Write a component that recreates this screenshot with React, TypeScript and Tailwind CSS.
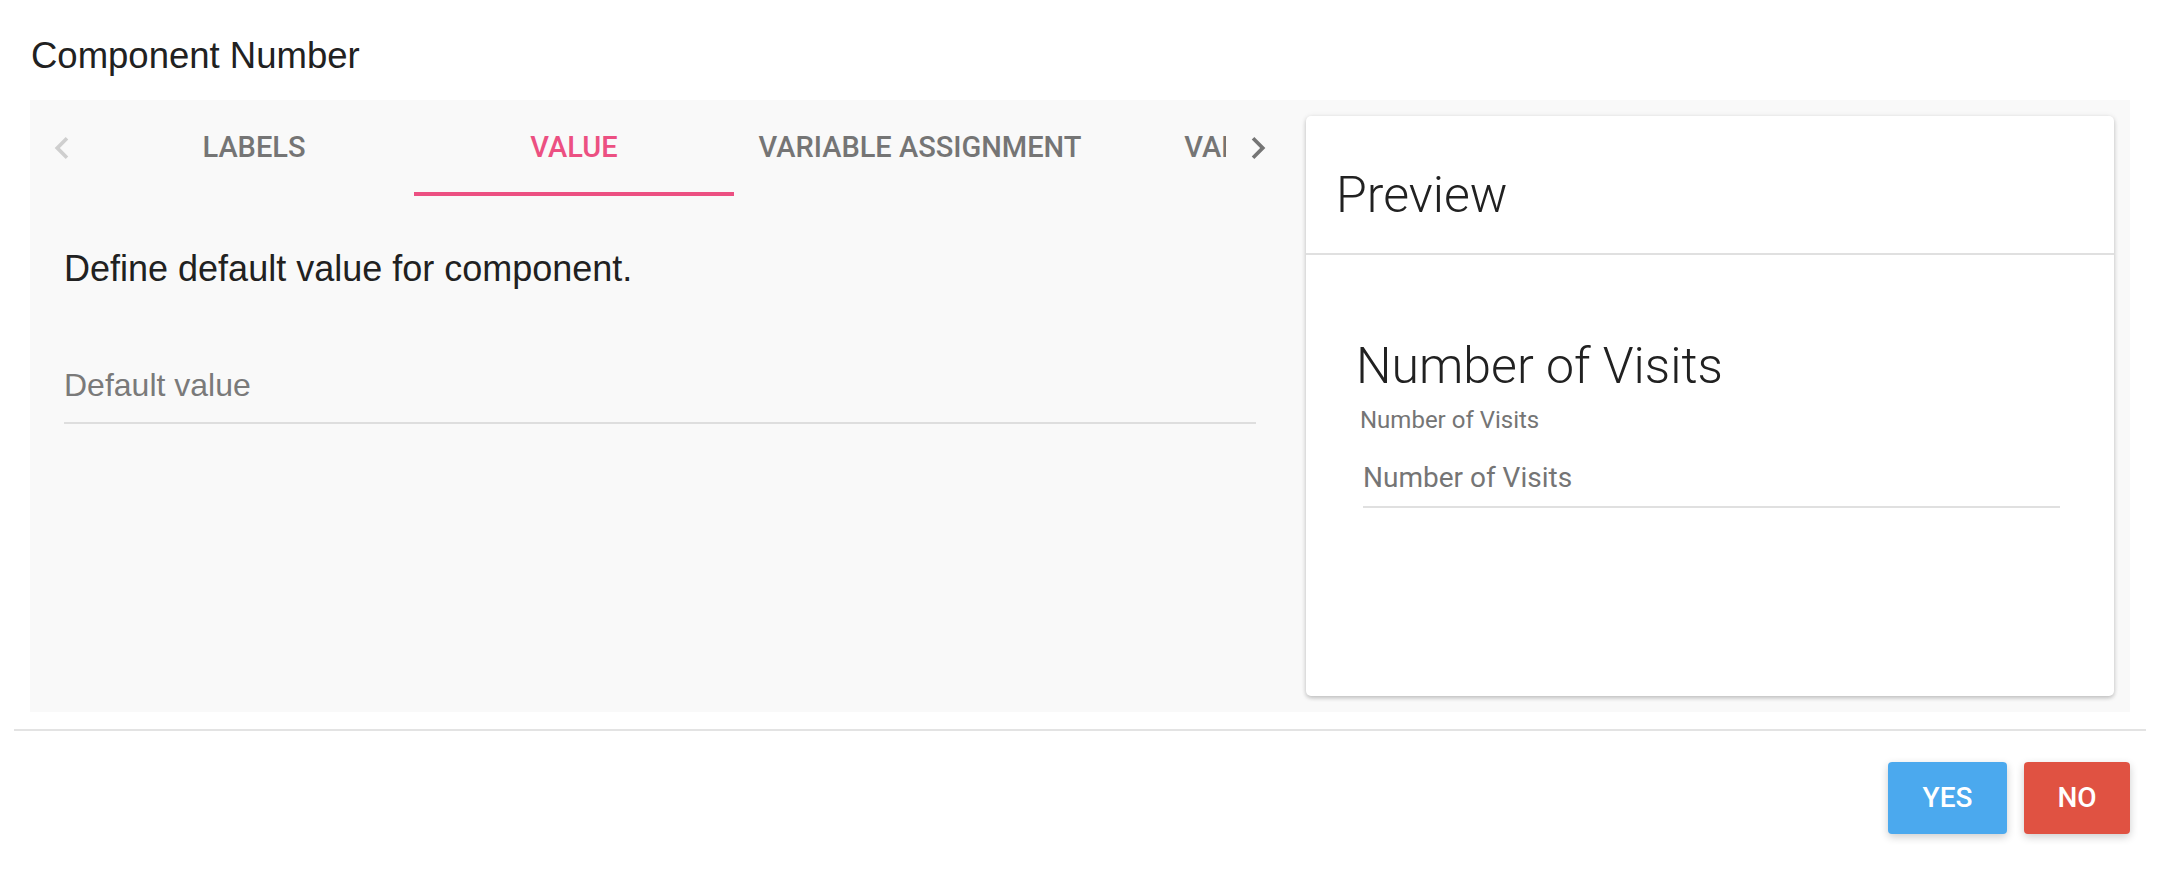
import React from "react";

const tabs = [
  { label: "LABELS", width: "w-[320px]" },
  { label: "VALUE", width: "w-[320px]", active: true },
  { label: "VARIABLE ASSIGNMENT", width: "w-[372px]" },
  { label: "VALIDATION", width: "w-[320px]" },
];

function ChevronLeft({ className }: { className?: string }) {
  return (
    <svg viewBox="0 0 24 24" className={className} fill="currentColor">
      <path d="M15.41 7.41L14 6l-6 6 6 6 1.41-1.41L10.83 12z" />
    </svg>
  );
}

function ChevronRight({ className }: { className?: string }) {
  return (
    <svg viewBox="0 0 24 24" className={className} fill="currentColor">
      <path d="M10 6L8.59 7.41 13.17 12l-4.58 4.59L10 18l6-6z" />
    </svg>
  );
}

export default function App() {
  return (
    <div className="min-h-screen bg-white font-['Liberation_Sans',Arial,sans-serif]">
      {/* Title */}
      <div className="px-[30px] pt-[34px]">
        <h1 className="text-[36.5px] leading-[44px] text-[#212121] pl-[1px]">
          Component Number
        </h1>
      </div>

      {/* Body panel */}
      <div className="mx-[30px] mt-[22px] flex h-[612px] bg-[#f9f9f9]">
        {/* Left: tabs + content */}
        <div className="flex min-w-0 flex-1 flex-col">
          <div className="flex h-[96px]">
            <button className="flex w-[64px] shrink-0 items-center justify-center text-[#cfcfcf]">
              <ChevronLeft className="h-[44px] w-[44px]" />
            </button>
            <div className="flex min-w-0 flex-1 overflow-hidden">
              {tabs.map((tab) => (
                <div
                  key={tab.label}
                  className={`relative flex shrink-0 items-center justify-center ${tab.width}`}
                >
                  <span
                    className={`whitespace-nowrap font-['Roboto',sans-serif] text-[29px] font-medium ${
                      tab.active ? "text-[#ec5082]" : "text-[#757575]"
                    }`}
                  >
                    {tab.label}
                  </span>
                  {tab.active && (
                    <div className="absolute bottom-0 left-0 right-0 h-[4px] bg-[#ec5082]" />
                  )}
                </div>
              ))}
            </div>
            <button className="flex w-[64px] shrink-0 items-center justify-center text-[#757575]">
              <ChevronRight className="h-[44px] w-[44px]" />
            </button>
          </div>

          <div className="px-[34px]">
            <p className="mt-[51px] text-[36px] leading-[44px] text-[#212121]">
              Define default value for component.
            </p>
            <div className="mt-[74px]">
              <div className="text-[32px] leading-[40px] text-[#7a7a7a]">
                Default value
              </div>
              <div className="mt-[17px] h-[2px] bg-[#dedede]" />
            </div>
          </div>
        </div>

        {/* Right: preview card */}
        <div className="my-[16px] mr-[16px] ml-[16px] flex w-[808px] shrink-0 flex-col rounded-[5px] bg-white shadow-[0_2px_4px_rgba(0,0,0,0.22),0_0_6px_rgba(0,0,0,0.06)]">
          <div className="h-[139px] border-b-2 border-[#e0e0e0] pl-[30px] pt-[50px]">
            <h2 className="font-['Roboto',sans-serif] text-[50px] font-light leading-[58px] text-[#212121]">
              Preview
            </h2>
          </div>
          <div className="px-[54px] pt-[82px] font-['Roboto',sans-serif]">
            <h3 className="-ml-[4px] text-[50px] font-light leading-[58px] text-[#212121]">
              Number of Visits
            </h3>
            <div className="mt-[11px] text-[24px] leading-[28px] text-[#757575]">
              Number of Visits
            </div>
            <div className="mt-[27px] pl-[3px]">
              <div className="text-[28px] leading-[34px] text-[#757575]">
                Number of Visits
              </div>
              <div className="mt-[11px] h-[2px] bg-[#e0e0e0]" />
            </div>
          </div>
        </div>
      </div>

      {/* Footer */}
      <div className="mx-[14px] mt-[17px] h-[2px] bg-[#e3e3e3]" />
      <div className="mt-[31px] flex justify-end gap-[17px] pr-[30px] font-['Roboto',sans-serif]">
        <button className="h-[72px] w-[119px] rounded-[4px] bg-[#4ba9ee] text-[28px] font-medium text-white shadow-[0_3px_8px_rgba(0,0,0,0.2)]">
          YES
        </button>
        <button className="h-[72px] w-[106px] rounded-[4px] bg-[#e05242] text-[28px] font-medium text-white shadow-[0_3px_8px_rgba(0,0,0,0.2)]">
          NO
        </button>
      </div>
    </div>
  );
}
